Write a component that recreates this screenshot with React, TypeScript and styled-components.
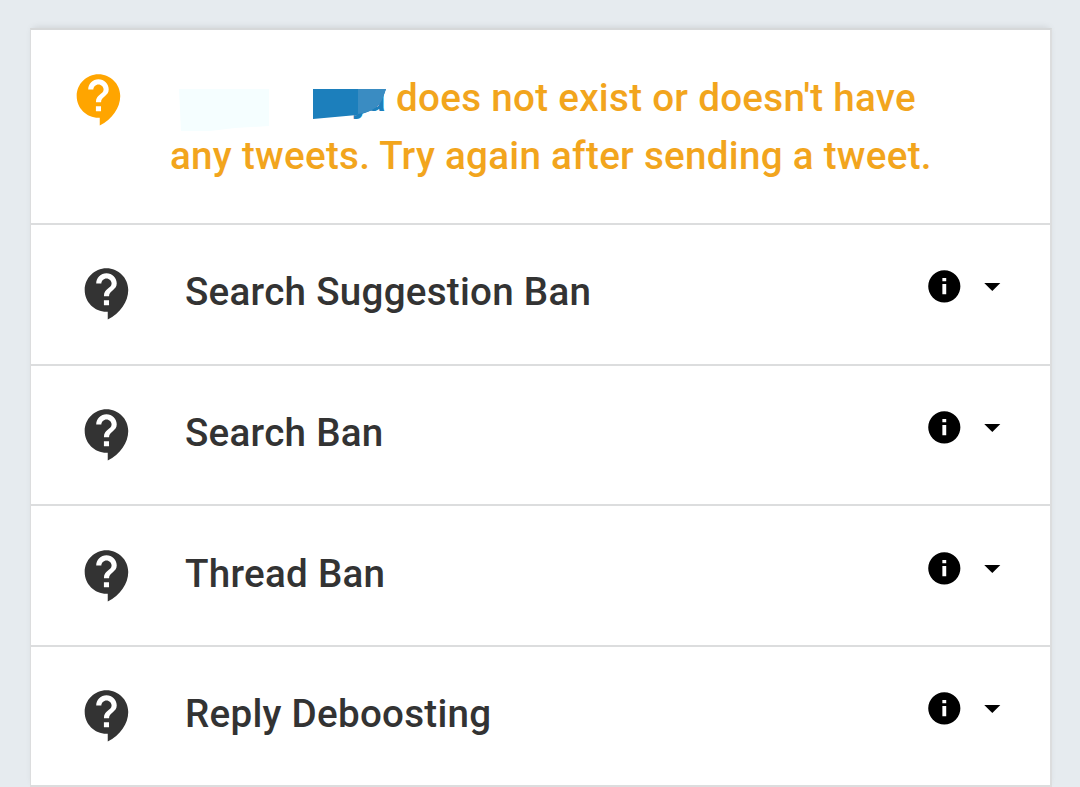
import styled, { createGlobalStyle } from 'styled-components';

const GlobalStyle = createGlobalStyle`
  * {
    box-sizing: border-box;
  }
  html,
  body {
    margin: 0;
    height: 787px;
    overflow: hidden;
    background: #e6ebef;
    font-family: Roboto, 'Liberation Sans', sans-serif;
  }
`;

const Page = styled.main`
  height: 787px;
  padding: 28px 28px 0 30px;
  overflow: hidden;
`;

const Card = styled.section`
  background: #fff;
  border: 2px solid #dcddde;
  border-top-color: #d6d8d9;
  border-left-width: 1.5px;
  box-shadow: 0 -3px 7px -3px rgba(0, 0, 0, 0.13);
`;

const StyledStatus = styled.div`
  display: flex;
  align-items: flex-start;
  height: 195px;
  padding: 39px 0 0 38px;
  border-bottom: 2px solid #dcddde;
  color: #ffa500;
`;

const Message = styled.p`
  margin: 0 0 0 39.5px;
  width: 780px;
  color: #f2a51d;
  font-size: 38.6px;
  font-weight: 500;
  line-height: 58px;
  letter-spacing: 0.29px;
  white-space: nowrap;
`;

const Handle = styled.span`
  position: relative;
  display: inline-block;
  width: 216.2px;
  text-align: right;
  color: #1c7fbc;
  svg {
    position: absolute;
    left: -0.5px;
    top: 0;
  }
`;

const StyledTestRow = styled.div`
  display: flex;
  align-items: flex-start;
  height: 140.6px;
  padding: 38.4px 38px 0 45.6px;
  border-bottom: 2px solid #dcddde;
  color: #333;
`;

const Label = styled.span`
  flex: 1;
  margin-left: 46.9px;
  font-size: 38.6px;
  font-weight: 500;
  line-height: 58px;
  letter-spacing: 0.27px;
`;

const Actions = styled.div`
  display: flex;
  gap: 10.2px;
  padding-top: 4px;
  color: #000;
`;

const Icon = styled.svg<{ $size: number }>`
  display: block;
  flex: none;
  width: ${({ $size }) => $size}px;
  height: ${({ $size }) => $size}px;
  fill: currentColor;
`;

function SupportIcon() {
  return (
    <Icon $size={61.5} viewBox="0 0 24 24">
      <path d="M11.5 2C6.81 2 3 5.81 3 10.5S6.81 19 11.5 19h.5v3c4.86-2.34 8-7 8-11.5C20 5.81 16.19 2 11.5 2zm1 14.5h-2v-2h2v2zm0-3.5h-2c0-3.25 3-3 3-5 0-1.1-.9-2-2-2s-2 .9-2 2h-2c0-2.21 1.79-4 4-4s4 1.79 4 4c0 2.5-3 2.75-3 5z" />
    </Icon>
  );
}

interface Props {
  name: string;
}

function TestRow({ name }: Props) {
  return (
    <StyledTestRow>
      <SupportIcon />
      <Label>{name}</Label>
      <Actions>
        <Icon $size={38.6} viewBox="0 0 24 24">
          <path d="M12 2a10 10 0 1 0 0 20 10 10 0 0 0 0-20zm1.200 15h-2.400v-6.500h2.400V17zm0-8.200h-2.400V6.900h2.400v1.900z" />
        </Icon>
        <Icon $size={38.6} viewBox="0 0 24 24">
          <path d="M7 10l5 5 5-5z" />
        </Icon>
      </Actions>
    </StyledTestRow>
  );
}

const tests = [
  'Search Suggestion Ban',
  'Search Ban',
  'Thread Ban',
  'Reply Deboosting',
];

function App() {
  return (
    <Page>
      <GlobalStyle />
      <Card>
        <StyledStatus>
          <SupportIcon />
          <Message>
            <Handle>
              ja
              <svg width="220" height="62" viewBox="170 69 220 62">
                <path d="M350 78H389V90H350z" fill="#fff" />
                <path d="M179 89H269V126L235 128L210 131H181z" fill="#f5feff" />
                <path d="M313 89H386L382 100Q377 111 357 115L313 119z" fill="#1c7fbc" />
                <path d="M358 89H386L382 100Q377 111 358 114z" fill="#3a8cc2" />
              </svg>
            </Handle>{' '}
            does not exist or doesn&apos;t have
            <br />
            any tweets. Try again after sending a tweet.
          </Message>
        </StyledStatus>
        {tests.map((name) => (
          <TestRow key={name} name={name} />
        ))}
      </Card>
    </Page>
  );
}

export default App;
